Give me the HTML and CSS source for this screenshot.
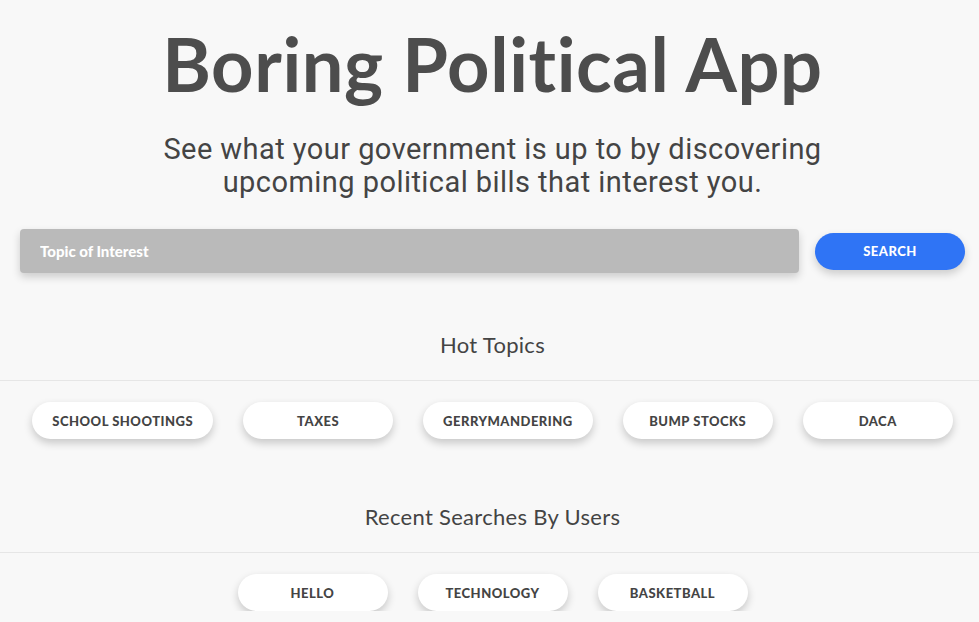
FILE: index.html
```html
<!DOCTYPE html>
<html lang="en">
<head>
<meta charset="utf-8">
<title>Boring Political App</title>
<link rel="stylesheet" href="styles.css">
</head>
<body>
<main class="page">
  <header class="hero">
    <h1 class="title">Boring Political App</h1>
    <p class="subtitle">See what your government is up to by discovering<br>upcoming political bills that interest you.</p>
  </header>
  <form class="search">
    <input class="search-input" type="text" placeholder="Topic of Interest">
    <button class="search-btn" type="button">Search</button>
  </form>
  <section class="topics">
    <h2 class="topics-title">Hot Topics</h2>
    <div class="rule"></div>
    <div class="pills">
      <button class="pill" type="button">School Shootings</button>
      <button class="pill" type="button">Taxes</button>
      <button class="pill" type="button">Gerrymandering</button>
      <button class="pill" type="button">Bump Stocks</button>
      <button class="pill" type="button">DACA</button>
    </div>
  </section>
  <section class="topics">
    <h2 class="topics-title">Recent Searches By Users</h2>
    <div class="rule"></div>
    <div class="pills">
      <button class="pill" type="button">Hello</button>
      <button class="pill" type="button">Technology</button>
      <button class="pill" type="button">Basketball</button>
    </div>
  </section>
</main>
</body>
</html>
```

FILE: styles.css
```css
* { box-sizing: border-box; }
html, body { margin: 0; padding: 0; }
body {
  background: #f8f8f8;
  font-family: "Lato", "Open Sans", sans-serif;
  color: #4a4a4a;
  overflow: hidden;
}
.page {
  display: flex;
  flex-direction: column;
}
.hero {
  display: flex;
  flex-direction: column;
  align-items: center;
  padding: 0 14px 0 20px;
}
.title {
  margin: 24px 0 0;
  font-family: "Lato", sans-serif;
  font-weight: 700;
  font-size: 74px;
  line-height: 80px;
  color: #4d4d4d;
  letter-spacing: 0.6px;
}
.subtitle {
  margin: 29px 0 0;
  font-family: "Roboto", sans-serif;
  font-size: 29px;
  line-height: 33px;
  letter-spacing: 0.45px;
  text-align: center;
  color: #444;
}
.search {
  display: flex;
  align-items: center;
  gap: 16px;
  margin: 30px 14px 0 20px;
}
.search-input {
  flex: 1;
  height: 44px;
  border: none;
  border-radius: 4px;
  background: #bababa;
  box-shadow: 0 4px 8px rgba(0,0,0,0.18);
  padding: 0 20px;
  font-family: "Lato", sans-serif;
  font-weight: 900;
  font-size: 15px;
  color: #fff;
  outline: none;
}
.search-input::placeholder { color: #fff; opacity: 1; }
.search-btn {
  width: 150px;
  height: 37px;
  border: none;
  border-radius: 19px;
  background: #2f74f5;
  color: #fff;
  font-family: "Lato", sans-serif;
  font-weight: 900;
  font-size: 13px;
  letter-spacing: 0.5px;
  text-transform: uppercase;
  box-shadow: 0 4px 8px rgba(0,0,0,0.18);
}
.topics {
  display: flex;
  flex-direction: column;
  margin-top: 59px;
}
.topics + .topics { margin-top: 65px; }
.topics-title {
  margin: 0;
  padding: 0 14px 0 20px;
  text-align: center;
  font-family: "Lato", sans-serif;
  font-weight: 400;
  font-size: 22px;
  line-height: 26px;
  letter-spacing: 0.3px;
  color: #444;
}
.rule {
  margin-top: 22px;
  height: 1px;
  background: #e6e6e6;
}
.pills {
  display: flex;
  justify-content: center;
  gap: 30px;
  margin-top: 21px;
  padding: 0 14px 0 20px;
}
.pill {
  min-width: 150px;
  height: 37px;
  padding: 0 20px;
  border: none;
  border-radius: 19px;
  background: #fff;
  box-shadow: 0 4px 8px rgba(0,0,0,0.2);
  font-family: "Lato", sans-serif;
  font-weight: 900;
  font-size: 13px;
  letter-spacing: 0.5px;
  text-transform: uppercase;
  color: #444;
}
```
